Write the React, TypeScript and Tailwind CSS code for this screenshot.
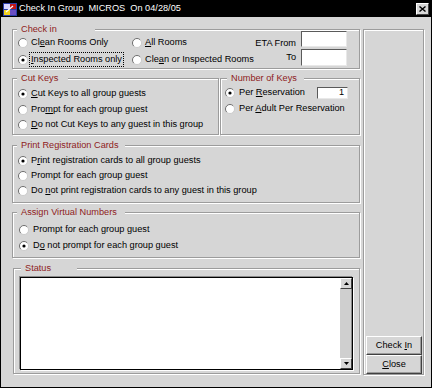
import type { ReactNode } from "react";

const etched = "border border-[#9c9c9c] shadow-[inset_1px_1px_0_#fff,1px_1px_0_#fff]";

function Radio({ checked = false }: { checked?: boolean }) {
  return (
    <svg width="10" height="10" viewBox="0 0 10 10" className="shrink-0">
      <circle cx="5" cy="5" r="4.5" fill="#fff" />
      <path d="M1.8 8.2 A4.5 4.5 0 0 1 8.2 1.8" fill="none" stroke="#6e6e6e" strokeWidth="1" />
      <path d="M8.2 1.8 A4.5 4.5 0 0 1 1.8 8.2" fill="none" stroke="#c4c4c4" strokeWidth="0.8" />
      {checked && <circle cx="5" cy="5" r="1.6" fill="#000" />}
    </svg>
  );
}

function Option({ checked, children, className = "", gap = "gap-[3px]" }: { checked?: boolean; children: ReactNode; className?: string; gap?: string }) {
  return (
    <div className={`flex items-center ${gap} ${className}`}>
      <Radio checked={checked} />
      <span className="whitespace-nowrap">{children}</span>
    </div>
  );
}

function Group({ title, left = "left-[4px]", pr, className = "", children }: { title: string; left?: string; pr: string; className?: string; children: ReactNode }) {
  return (
    <div className={`relative ${etched} ${className}`}>
      <span className={`absolute -top-[6px] ${left} bg-[#d6d6d6] pl-[4px] ${pr} leading-[11px] text-[#8e1b1b] whitespace-nowrap`}>
        {title}
      </span>
      {children}
    </div>
  );
}

function Field({ className = "", children }: { className?: string; children?: ReactNode }) {
  return (
    <div className={`bg-white border border-t-[#5a5a5a] border-l-[#5a5a5a] border-r-[#e8e8e8] border-b-[#e8e8e8] ${className}`}>
      {children}
    </div>
  );
}

function Button({ children }: { children: ReactNode }) {
  return (
    <div className="h-[19px] flex items-center justify-center border border-t-white border-l-white border-r-[#404040] border-b-[#404040] shadow-[inset_-1px_-1px_0_#9a9a9a]">
      <span className="whitespace-nowrap">{children}</span>
    </div>
  );
}

function Arrow({ up }: { up?: boolean }) {
  return (
    <div className="h-[11px] flex items-center justify-center bg-[#d6d6d6] border border-t-white border-l-white border-r-[#404040] border-b-[#404040]">
      <svg width="5" height="3" viewBox="0 0 5 3">
        <path d={up ? "M0 3 L2.5 0 L5 3 Z" : "M0 0 L5 0 L2.5 3 Z"} fill="#000" />
      </svg>
    </div>
  );
}

export default function App() {
  return (
    <div className="w-[432px] h-[388px] bg-[#d6d6d6] border border-black flex flex-col font-['Liberation_Sans',Arial,sans-serif] text-[9.2px] leading-none text-black">
      {/* title bar */}
      <div className="h-[16px] bg-black flex items-center pl-[2px] pr-[2px] shrink-0">
        <svg width="14" height="13" viewBox="0 0 14 13" className="shrink-0">
          <rect x="0" y="0" width="14" height="13" fill="#2a3fa8" />
          <rect x="1" y="1" width="6" height="5" fill="#d8d8ff" />
          <rect x="7" y="1" width="6" height="5" fill="#c21818" />
          <rect x="1" y="7" width="6" height="5" fill="#f2d21c" />
          <rect x="7" y="7" width="6" height="5" fill="#6a4fc4" />
          <path d="M3 9 L10 3" stroke="#fff" strokeWidth="1.2" />
        </svg>
        <span className="ml-[2px] text-white whitespace-pre">Check In Group  MICROS  On 04/28/05</span>
        <div className="ml-auto w-[13px] h-[12px] bg-[#d6d6d6] flex items-center justify-center border border-t-white border-l-white border-r-[#404040] border-b-[#404040]">
          <svg width="7" height="6" viewBox="0 0 7 6">
            <path d="M0.5 0.5 L6.5 5.5 M6.5 0.5 L0.5 5.5" stroke="#000" strokeWidth="1.4" />
          </svg>
        </div>
      </div>

      <div className="flex pt-[12px] pl-[11px]">
        {/* left column */}
        <div className="w-[348px] flex flex-col">
          <Group title="Check in" pr="pr-[38px]" className="h-[40px] flex">
            <div className="grid grid-cols-[114px_auto] pl-[5px] pt-[5px]">
              <Option className="h-[16px]">Cl<u>e</u>an Rooms Only</Option>
              <Option className="h-[16px]"><u>A</u>ll Rooms</Option>
              <Option checked className="h-[16px]">
                <span className="outline-1 outline-dotted outline-black outline-offset-1 leading-[11px] inline-block"><u>I</u>nspected Rooms only</span>
              </Option>
              <Option className="h-[16px]">Cle<u>a</u>n or Inspected Rooms</Option>
            </div>
            <div className="ml-auto pr-[12px] pt-[1px] flex flex-col gap-[2px]">
              <div className="flex items-end gap-[5px]">
                <span className="leading-[7px]">ETA From</span>
                <Field className="w-[46px] h-[16px]" />
              </div>
              <div className="flex items-center justify-end gap-[5px]">
                <span>To</span>
                <Field className="w-[46px] h-[17px]" />
              </div>
            </div>
          </Group>

          <div className="mt-[9px] flex gap-[1px] h-[57px]">
            <Group title="Cut Keys" pr="pr-[10px]" className="w-[207px] pl-[5px] pt-[7px]">
              <Option checked className="h-[16px]"><u>C</u>ut Keys to all group guests</Option>
              <Option className="h-[15px]">Pro<u>m</u>pt for each group guest</Option>
              <Option className="h-[16px]"><u>D</u>o not Cut Keys to any guest in this group</Option>
            </Group>
            <Group title="Number of Keys" left="left-[6px]" pr="pr-[7px]" className="w-[140px] pl-[4px] pr-[11px] pt-[6px]">
              <div className="h-[16px] flex items-center justify-between">
                <Option checked gap="gap-[4px]">Per <u>R</u>eservation</Option>
                <Field className="w-[31px] h-[12px] flex items-center justify-end pr-[3px]">1</Field>
              </div>
              <Option className="h-[16px]" gap="gap-[4px]">Per <u>A</u>dult Per Reservation</Option>
            </Group>
          </div>

          <Group title="Print Registration Cards" pr="pr-[6px]" className="mt-[10px] h-[58px] pl-[5px] pt-[7px]">
            <Option checked className="h-[15px]">P<u>r</u>int registration cards to all group guests</Option>
            <Option className="h-[15px]">Prompt for each group guest</Option>
            <Option className="h-[16px]">Do <u>n</u>ot print registration cards to any guest in this group</Option>
          </Group>

          <Group title="Assign Virtual Numbers" pr="pr-[8px]" className="mt-[9px] h-[46px] pl-[6px] pt-[9px]">
            <Option className="h-[16px]" gap="gap-[4px]">Prompt for each group guest</Option>
            <Option checked className="h-[16px]" gap="gap-[4px]">D<u>o</u> not prompt for each group guest</Option>
          </Group>

          <Group title="Status" left="left-[7px]" pr="pr-[26px]" className="mt-[10px] ml-[1px] h-[106px] pl-[6px] pr-[6px] pt-[8px] pb-[3px]">
            <div className="h-[93px] bg-white border border-black shadow-[-1px_-1px_0_#8a8a8a,1px_1px_0_#fff] flex justify-end">
              <div className="w-[12px] flex flex-col bg-[#cfcfcf]">
                <Arrow up />
                <div className="flex-1 border-r border-[#8a8a8a]" />
                <Arrow />
              </div>
            </div>
          </Group>
        </div>

        {/* right panel */}
        <div className={`ml-[3px] w-[61px] h-[346px] ${etched} flex flex-col justify-end pl-[2px] pr-[1px]`}>
          <Button>Check <u>I</u>n</Button>
          <Button><u>C</u>lose</Button>
        </div>
      </div>
    </div>
  );
}
